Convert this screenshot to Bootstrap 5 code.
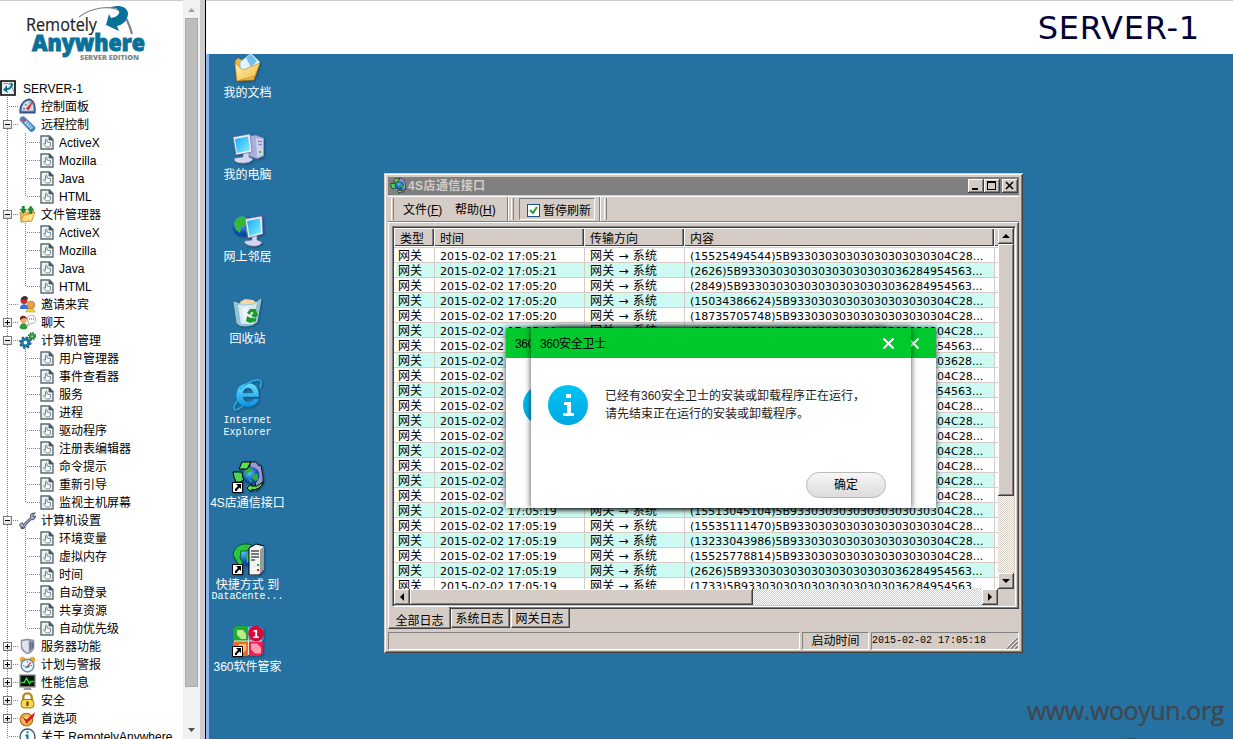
<!DOCTYPE html>
<html lang="zh-CN">
<head>
<meta charset="utf-8">
<title>SERVER-1</title>
<link href="https://cdn.jsdelivr.net/npm/bootstrap@5.3.0/dist/css/bootstrap.min.css" rel="stylesheet">
<style>
:root{--face:#d5cdc5;--dark:#404040;--mid:#808080;--sky:#2572a2}
body{height:739px;width:1233px;overflow:hidden;background:#fff;color:#000;font:12px/18px "Liberation Sans","Noto Sans CJK SC",sans-serif}
svg{display:block;flex:none}
/* left tree pane */
.side{width:206px;border-right:1px solid #000}
.side-main{width:183px;overflow:hidden;border-top:1px solid #ccc}
.brand-box{height:78px;flex:none}
.node{height:18px;white-space:nowrap;flex:none}
.node .zh{padding-top:2px}
.cell{width:18px;height:18px;flex:none;position:relative;display:flex;align-items:center;justify-content:center}
.vline{background:repeating-linear-gradient(180deg,#808080 0 1px,transparent 1px 2px) 7px 0/1px 100% no-repeat}
.vhalf{background:repeating-linear-gradient(180deg,#808080 0 1px,transparent 1px 2px) 7px 0/1px 10px no-repeat}
.hline::before{content:"";position:absolute;left:8px;right:0;top:9px;height:1px;background:repeating-linear-gradient(90deg,transparent 0 1px,#808080 1px 2px)}
.lv2.hline::before{right:-4px}
.box{position:absolute;left:3px;top:5px;width:9px;height:9px;border:1px solid #777;background:linear-gradient(#fff,#ddd)}
.box::before{content:"";position:absolute;left:1px;right:1px;top:3px;height:1px;background:#000}
.box.plus::after{content:"";position:absolute;left:3px;top:1px;bottom:1px;width:1px;background:#000}
.page-ico{margin:0 5px 0 4px}
.sb{width:17px;background:#f1f1f1;padding:0 2px}
.sb-thumb{height:669px;background:#bcbcbc;border:1px solid #aaa}
.sash{width:5px;background:#ccc}
/* right pane */
.topbar{height:54px;border-top:1px solid #ccc;padding-right:33px;font:32px/55px "DejaVu Sans",sans-serif;letter-spacing:.8px;color:#000033}
.desk{background:var(--sky);border-left:3px solid #8fb4ea;position:relative;overflow:hidden}
.desk::before{content:"";position:absolute;left:-1px;top:0;bottom:0;width:1px;background:#b9c4d4}
.launchers{width:77px;margin-top:-3px}
.launcher{height:82px;flex:none;color:#fff;text-align:center;line-height:12px;white-space:nowrap}
.launcher svg{margin-bottom:4px;filter:drop-shadow(1px 1px 1px rgba(0,0,0,.35))}
.mono{font-family:"Liberation Mono","Noto Sans CJK SC",monospace;font-size:10px}
.launcher .mono{display:block}
/* classic window */
.win{position:absolute;left:175px;top:119px;width:639px;height:480px;padding:4px;background:var(--face);line-height:14px;
 box-shadow:inset 1px 1px var(--face),inset -1px -1px var(--dark),inset 2px 2px #fff,inset -2px -2px var(--mid)}
.raised{background:var(--face);box-shadow:inset -1px -1px var(--dark),inset 1px 1px #fff,inset -2px -2px var(--mid)}
.caption-bar{height:18px;background:#808080;color:var(--face);font-weight:bold;line-height:17px;padding:0 1px 0 2px;letter-spacing:.4px}
.wbtn{width:16px;height:14px}
.tools{height:26px;margin-top:1px;border-top:1px solid #fff;border-bottom:1px solid var(--mid);flex:none;padding-left:3px}
.tools span{padding-top:2px}
.grip{width:3px;height:22px;border-left:1px solid #fff;border-right:1px solid var(--mid);flex:none}
.bandend{width:2px;height:24px;border-left:1px solid var(--mid);border-right:1px solid #fff;flex:none}
.pressed{width:76px;height:22px;border:1px solid #fff;border-top-color:var(--mid);border-left-color:var(--mid);padding:3px 0 0 7px;margin:0 4px 0 5px}
.chk{width:13px;height:13px;border:1px solid #1c5180;background:#fff;margin-right:3px}
.tabpage{height:387px;flex:none;border:1px solid #fff;border-right-color:var(--dark);border-bottom-color:var(--dark);box-shadow:inset -1px -1px var(--mid);padding:3px}
.sunk{width:624px;height:381px;border:1px solid;border-color:var(--mid) #fff #fff var(--mid);box-shadow:inset 1px 1px var(--dark);padding:1px}
.listwrap{width:604px}
.listbox{height:361px;background:#fff;overflow:hidden}
.lhead{display:grid;grid-template-columns:40px 150px 100px 310px 4px;height:18px;margin-bottom:1px}
.lhead div{background:var(--face);box-shadow:inset 1px 1px #fff,inset -1px -1px var(--dark),inset -2px 0 var(--mid);padding:4px 0 0 6px;line-height:14px}
.rows{border-top:1px solid var(--face);font:11px/14px "DejaVu Sans","Noto Sans CJK SC",sans-serif}
.lrow{display:grid;grid-template-columns:41px 150px 100px 310px 2px;height:15px;white-space:nowrap}
.lrow div{border-right:1px solid var(--face);border-bottom:1px solid var(--face);padding-left:5px;overflow:hidden;height:15px;line-height:17px}
.lrow div:last-child{border-right:0}
.lrow .cj{font-size:12px;padding-left:5px;letter-spacing:.2px}
.lrow .cj:first-child{padding-left:4px;letter-spacing:0}
.lrow:nth-child(even) div:not(:last-child){background:#cdfaf2}
.lrow:nth-child(even) div:first-child{box-shadow:inset 2px 0 #fff}
.dither{background:conic-gradient(#fff 25%,var(--face) 0 50%,#fff 0 75%,var(--face) 0) 0 0/2px 2px}
.vbar,.hbar,.arrowbtn{display:flex}
.vbar{flex-direction:column;width:16px;height:361px}
.hbar{height:16px}
.arrowbtn{width:16px;height:16px;align-items:center;justify-content:center;flex:none}
.tabs{height:21px;align-items:flex-start}
.tabx{height:19px;width:59px;text-align:center;border:1px solid #fff;border-top:0;border-right-color:var(--dark);border-bottom-color:var(--dark);box-shadow:inset -1px -1px var(--mid);line-height:21px;margin-right:1px;padding-right:2px}
.tabx.on{width:63px;height:22px;margin:-2px 0 0 0;background:var(--face);position:relative;line-height:28px;padding:0}
.status{height:18px;margin-top:2px;gap:2px}
.pane{border:1px solid #fff;border-top-color:var(--mid);border-left-color:var(--mid);line-height:16px}
/* message dialogs */
.msg{position:absolute;top:274px;width:380px;height:180px;background:#fff;box-shadow:0 0 6px rgba(0,0,0,.75);line-height:18px}
.msg-head{height:30px;background:#00c92d;padding:0 17px 0 9px}
.msg-head span{padding-top:2px;letter-spacing:-.3px}
.msg-body{height:150px;padding:27px 25px 10px 17px;color:#222}
.msg-text{margin:2px 0 0 17px}
.okbtn{width:80px;height:26px;border:1px solid #b9b9b9;border-radius:13px;background:linear-gradient(#f6f6f6,#dcdcdc);font-size:12px;line-height:24px;padding:0;color:#000}
.stamp{position:absolute;right:9px;bottom:12px;font:25px/34px "Open Sans",sans-serif;letter-spacing:-.4px;color:#40474c;-webkit-text-stroke:.3px #40474c}
.stamp-dot{position:absolute;left:909px;top:684px;width:26px;height:26px;border-radius:50%;background:#1d4a66}
</style>
</head>
<body class="d-flex">
<svg width="0" height="0" class="position-absolute">
<defs>
<linearGradient id="scr" x1="0" y1="0" x2="1" y2="1"><stop offset="0" stop-color="#1aa9f5"/><stop offset="1" stop-color="#7ff0ff"/></linearGradient>
<linearGradient id="fold" x1="0" y1="0" x2="1" y2="1"><stop offset="0" stop-color="#fff3b0"/><stop offset="1" stop-color="#f2b93c"/></linearGradient>
<radialGradient id="globe" cx=".4" cy=".35"><stop offset="0" stop-color="#5cc8ff"/><stop offset="1" stop-color="#0846b0"/></radialGradient>
<linearGradient id="ieg" x1="0" y1="0" x2="0" y2="1"><stop offset="0" stop-color="#6fe0ff"/><stop offset="1" stop-color="#0a8ee0"/></linearGradient>
<linearGradient id="inf" x1="0" y1="0" x2="0" y2="1"><stop offset="0" stop-color="#00c4f5"/><stop offset="1" stop-color="#00a8e2"/></linearGradient>
<symbol id="t-root" viewBox="0 0 17 17"><path d="M1 1h14v14H1z" fill="#e8f2f6" stroke="#000" stroke-width="1.600"/><path d="M3.500 4c4-2 8 0 10.500 8" fill="none" stroke="#888"/><path d="M9 3c4-1 5 2 3 4-1 2-3 3-5 3l1 3-5-3 4-5v3c2 0 4-2 4-3s-1-1.500-2-2z" fill="#08708f"/></symbol>
<symbol id="t-dash" viewBox="0 0 16 16"><path d="M1 14C0 7 4 2 10 1c4 1 6 6 5 13z" fill="#5879a8" stroke="#2c4a78"/><path d="M2.500 12c0-6 3-9 7-9.500 3 1 4.500 5 4 9.500z" fill="#cfdded"/><path d="M7 10l5.500-6L9 11z" fill="#e02030" stroke="#e02030" stroke-width=".8"/><path d="M4 10h1.500M6 6l1 1M10 4v1" stroke="#456"/></symbol>
<symbol id="t-remote" viewBox="0 0 16 16"><path d="M1 4Q1 0 5 1l10 9.500q0 4-4 4z" fill="#4a92cc" stroke="#2a6aa4" stroke-width=".8"/><path d="M6 5.500l6 6" stroke="#c9e6fa" stroke-width="3" stroke-dasharray="1.500 1"/><circle cx="4.300" cy="3.500" r="1.500" fill="#d33a6c"/></symbol>
<symbol id="t-files" viewBox="0 0 16 16"><path d="M1 6l5-1 1 1 7-1-2 9-10 1z" fill="#f4bd4d" stroke="#b67b1d" stroke-width=".7"/><path d="M4 9l11-3-3 8-10 1z" fill="#ffe08a" stroke="#b67b1d" stroke-width=".6"/><path d="M3 0v3H1l3 4 3-4H5V0zM10 7V4H8l3-4 3 4h-2v3z" fill="#1a9a2c" stroke="#075c14" stroke-width=".5"/></symbol>
<symbol id="t-guest" viewBox="0 0 17 17"><path d="M1 12c0-5 8-5 8 0v1H1z" fill="#3c6fe0"/><circle cx="5" cy="4.500" r="3.500" fill="#c22f2a"/><path d="M2 4c0-5 7-5 7-1z" fill="#333"/><path d="M7 16c0-5 9-5 9 0z" fill="#f3d435" stroke="#b79310" stroke-width=".5"/><circle cx="12" cy="9" r="3.800" fill="#eda04a" stroke="#a65d1a" stroke-width=".6"/></symbol>
<symbol id="t-chat" viewBox="0 0 17 17"><path d="M1 14c0-6 7-6 7 0l-2 1H3z" fill="#28a035" stroke="#106018" stroke-width=".5"/><circle cx="4.500" cy="6" r="3.300" fill="#efb06c"/><path d="M1 6c-1-6 7-5 7-1L5 4z" fill="#7a2a12"/><path d="M8 5c0-5 8.500-5 8.500 0s-3 4.500-5 4.500l-3 2.500 1-4z" fill="#fff" stroke="#999" stroke-width=".8"/><path d="M10 5h1m1 0h1m1 0h1" stroke="#555"/></symbol>
<symbol id="t-gear" viewBox="0 0 16 16"><circle cx="6" cy="10" r="3.200" fill="none" stroke="#2278a5" stroke-width="3"/><circle cx="6" cy="10" r="5" fill="none" stroke="#1b5d84" stroke-width="1.800" stroke-dasharray="2 1.900"/><circle cx="12.300" cy="4" r="1.800" fill="none" stroke="#2d9a44" stroke-width="2.200"/><circle cx="12.300" cy="4" r="3.200" fill="none" stroke="#187030" stroke-width="1.400" stroke-dasharray="1.400 1.100"/></symbol>
<symbol id="t-wrench" viewBox="0 0 16 16"><path d="M2 14.500q-3-3 1-4.500l1 2 1-1L11 5q-1-4 4-4l-2 2 .5 1.500 2-.5q-1 4-4 3L6 12.500q0 3.500-4 3.500l2-2z" fill="#b8bdd0" stroke="#555c78" stroke-width="1"/></symbol>
<symbol id="t-shield" viewBox="0 0 16 16"><path d="M2 2l6-1 6 1v8q-2 4-6 5-5-2-6-6z" fill="#9599b0" stroke="#777b93" stroke-width=".6"/><path d="M3 3l6-1v12q-5-2-6-6z" fill="#e3e5ee"/><path d="M11 4v7M13 4v5" stroke="#4f556e"/></symbol>
<symbol id="t-alarm" viewBox="0 0 16 16"><circle cx="3.500" cy="3.500" r="2.800" fill="#f2a431"/><circle cx="12.500" cy="3.500" r="2.800" fill="#f2a431"/><circle cx="8" cy="9" r="6" fill="#e3f5fa" stroke="#6c8ca0" stroke-width="1.400"/><path d="M5 10q3 3 6-1z" fill="#20809c"/><path d="M8 10l3-4" stroke="#d22"/><path d="M4 9h1M8 5v1M12 9h-1" stroke="#467"/></symbol>
<symbol id="t-perf" viewBox="0 0 16 16"><path d="M1 1h14v11H1z" fill="#06140a" stroke="#777" stroke-width="1.200"/><path d="M2 8h3l2-4 3 5 1-2h3" fill="none" stroke="#24e044" stroke-width="1.400"/><path d="M5 13h6l1 2H4z" fill="#999"/></symbol>
<symbol id="t-lock" viewBox="0 0 16 16"><path d="M4 8V5c0-5 8-5 8 0v3" fill="none" stroke="#b18a1e" stroke-width="2.200"/><rect x="2" y="7" width="12" height="8" rx="3" fill="#ffd84a" stroke="#94690a" stroke-width=".9"/><path d="M8 9v4" stroke="#503800" stroke-width="2"/></symbol>
<symbol id="t-pref" viewBox="0 0 16 16"><circle cx="7" cy="9" r="6" fill="#efb04a" stroke="#a36a18"/><circle cx="7" cy="9" r="3" fill="#ffe3a0"/><path d="M3 6l4 3 8-7-1 4-7 7z" fill="#dd1d23"/></symbol>
<symbol id="t-info" viewBox="0 0 16 16"><circle cx="8" cy="8" r="7" fill="#fff" stroke="#3b5c70" stroke-width="1.300"/><path d="M8 3v2M6 7h2v5M6 12h4" fill="none" stroke="#087fae" stroke-width="2"/></symbol>
<symbol id="t-page" viewBox="0 0 14 15"><path d="M1 1h8.500L13 4.500V14H1z" fill="#eef2f2" stroke="#5c6c74" stroke-width="1.400"/><path d="M9 1v4h4z" fill="#4a5a62" stroke="#4a5a62" stroke-width=".8"/><path d="M5.500 9V4.500q1-1 1.500 0V7l3.500.7V10L9.500 12h-3L3.500 9l.7-.7z" fill="#fff" stroke="#6c7e88" stroke-width=".9"/></symbol>
<symbol id="shortcut" viewBox="0 0 11 11"><path d="M.5.5h10v10H.5z" fill="#fff" stroke="#000"/><path d="M4 2h5v5L7.500 5.500 5 8v1H3V7l3-3z" fill="#000"/></symbol>
<symbol id="d-docs" viewBox="0 0 32 32"><path d="M3 10l3-3 6 3 3-4 12 8-5 15-17 1z" fill="#f0b83e" stroke="#a97216" stroke-width=".7"/><path d="M8 11L19 2l9 9-8 12-12 1z" fill="#e1f4ff" stroke="#6fa9cf" stroke-width=".7"/><path d="M14 7l5-4 6 7-6 6z" fill="#75bdee"/><path d="M3 12l8 7 17-7-5 13-18 5z" fill="url(#fold)" stroke="#c38b24" stroke-width=".7"/></symbol>
<symbol id="d-pc" viewBox="0 0 32 32"><path d="M17 3l7-1 8 3v18l-7 3-8-3z" fill="#aab0dc" stroke="#62689f" stroke-width=".6"/><path d="M24 5l7 1v16l-6 3z" fill="#cfd2ef"/><path d="M26 8l4 1M26 11l4 1" stroke="#6b70aa"/><path d="M27 19h2" stroke="#29c93a" stroke-width="2"/><path d="M11 18l6-1v7l4 2q-2 5-14 4-7-2-4-5l8-1z" fill="#d2d5ee" stroke="#7277a5" stroke-width=".6"/><path d="M1 4l17-3 2 18-16 3z" fill="#eceefa" stroke="#6268a0" stroke-width=".7"/><path d="M3 6l13-2.500L18 17 5 20z" fill="url(#scr)"/></symbol>
<symbol id="d-net" viewBox="0 0 32 32"><circle cx="11" cy="11" r="10.500" fill="url(#globe)"/><path d="M4 4l6-3 5 2-3 3 2 3-5 3-1 6-4-3-2-7zM13 13l5 2-3 5z" fill="#37b832"/><path d="M20 20l5-1v6l5 2q-1 5-11 4-8-2-6-5l7-1z" fill="#d2d5ee" stroke="#7277a5" stroke-width=".6"/><path d="M13 4l17-3 1 18-15 4z" fill="#eceefa" stroke="#6268a0" stroke-width=".7"/><path d="M15 6l13-2.500 1 14L17.500 21z" fill="url(#scr)"/></symbol>
<symbol id="d-bin" viewBox="0 0 32 32"><path d="M8 5l5-3 8 1 4 3-2 8H10z" fill="#f7d7a2"/><path d="M6 8l6-1 8 2 5 6-4 12H9z" fill="#e6e3f3"/><path d="M2 5l9 3 11-1 7-5-4 23q-4 4-12 4-6 0-8-3z" fill="#cdeff6" fill-opacity=".7" stroke="#9fc6da"/><path d="M10 12l5-3 6 8-3 9-6-4z" fill="#f4f2fb"/><path d="M15 16l3-4h6l-1 4-4-1-1 3zM24 13l2 5-4 4v-2l-3-1zM15 19l-1 5 4 2 6-2v-4l-5 1z" fill="#17a027"/></symbol>
<symbol id="d-ie" viewBox="0 0 32 32"><path d="M27 18H11q1 5 6 5 3 0 5-3h5q-3 8-11 8Q4 27 4 16 5 5 16 4q11 0 11 14zM11 14h10q-1-5-5-5t-5 5z" fill="url(#ieg)" stroke="#0a7fc0" stroke-width=".5"/><path d="M5 22Q0 30 3 31q3 0 8-4M8 10Q20 0 27 1q4 1 1 8" fill="none" stroke="#20aee8" stroke-width="1.600"/></symbol>
<symbol id="d-4s" viewBox="0 0 32 32"><path d="M18 1h6l3 4 2-1 2 12v6l-6 8-2-3 2-14-7-6z" fill="#9b98cf" stroke="#181530"/><circle cx="19" cy="14.500" r="8.500" fill="url(#globe)"/><path d="M14 8l5-1 1 3-4 2-2 3zM22 13l4 0 0 6-3 1-3-3zM16 18l4 1-1 3z" fill="#2fae3a"/><path d="M10 1h9l-4 7H7z" fill="#58dd58" stroke="#000"/><path d="M1 11h9l1 6 1 2-4 2H4l-2-5z" fill="#4cd552" stroke="#000"/><path d="M15 27l4-4v2l6 0 6-4q-2 8-12 8v2z" fill="#58dd58" stroke="#000"/></symbol>
<symbol id="d-dc" viewBox="0 0 32 32"><circle cx="13" cy="12" r="11" fill="url(#globe)"/><path d="M1 12C2 3 10-1 20 2l-5 6-6 0-1 7 3 5-3 4z" fill="#2bc63c" stroke="#042" stroke-width=".8"/><path d="M14 12l5-2v7l-4 3z" fill="#2bc63c"/><path d="M17 5l7-4 8 2v24l-5 5H17z" fill="#f3f3f3" stroke="#000"/><path d="M28 7v24l4-4V3z" fill="#999"/><path d="M19 8h8M19 11h8M19 14h8M19 17h4" stroke="#000"/><path d="M25 22h2" stroke="#18b42a" stroke-width="2"/><path d="M25 27h2" stroke="#d22" stroke-width="2"/></symbol>
<symbol id="d-360" viewBox="0 0 32 32"><rect x="2" y="2" width="28" height="28" rx="3" fill="#e8e8d0"/><path d="M4 1h12v14.500H1V4z" fill="#20aa35"/><path d="M16.500 1h12l3 3v11.500h-15z" fill="#2c9fdd"/><path d="M1 16.500h15V31H4l-3-3z" fill="#f1682d"/><path d="M17 16.500h14V28l-3 3H17z" fill="#ec1e55"/><path d="M5 5h6l3 4v5H9l-4-4z" fill="#b9eb8d"/><path d="M7 19h7v6l-3 3H6v-5z" fill="#ffc16e"/><path d="M19 18.500h6l4 4v6h-6l-4-4z" fill="#ff9db0"/><circle cx="24" cy="8.500" r="7.800" fill="#d9083d"/><text x="24" y="12.500" font-family="DejaVu Sans" font-size="10.500" font-weight="bold" fill="#fff" text-anchor="middle">1</text></symbol>
</defs>
</svg>

<aside class="side d-flex h-100 flex-shrink-0">
  <div class="side-main d-flex flex-column h-100">
    <div class="brand-box">
      <svg width="183" height="66" viewBox="0 1 183 66">
        <path d="M79 17C92 7 111 5 120 11" fill="none" stroke="#7d868b" stroke-width="1.200"/>
        <path d="M121 11q7 8 11 23" fill="none" stroke="#7d868b" stroke-width="2.200"/>
        <path d="M109 8c8-4 18-2 19 5 0 7-5 12-11 13l2 5-13-6 3-11 2 4c6-1 9-4 8-7-1-3-5-4-10-3z" fill="#08719a"/>
        <text x="26" y="30.500" font-family="Open Sans" font-size="19" fill="#222" stroke="#222" stroke-width=".2" textLength="71" lengthAdjust="spacingAndGlyphs">Remotely</text>
        <text x="32" y="51" font-family="Open Sans" font-size="22.500" font-weight="800" fill="#08719a" stroke="#08719a" stroke-width=".9" textLength="113" lengthAdjust="spacingAndGlyphs">Anywhere</text>
        <text x="80" y="59.500" font-family="Open Sans" font-size="7.500" font-weight="800" fill="#7f8589" textLength="59" lengthAdjust="spacingAndGlyphs">SERVER EDITION</text>
      </svg>
    </div>
    <div id="tree"></div>
  </div>
  <div class="sb d-flex flex-column">
    <svg width="13" height="18"><path d="M3 12h7L6.500 8z" fill="#a3a3a3"/></svg>
    <div class="sb-thumb"></div>
    <svg width="13" height="52"><path d="M3 41h7l-3.500 4z" fill="#505050"/></svg>
  </div>
  <div class="sash"></div>
</aside>

<main class="flex-grow-1 d-flex flex-column h-100">
  <header class="topbar text-end flex-shrink-0">SERVER-1</header>
  <section class="desk flex-grow-1">
    <div class="launchers d-flex flex-column" id="launchers"></div>

    <div class="win d-flex flex-column">
      <div class="caption-bar d-flex align-items-center flex-shrink-0">
        <svg width="16" height="16" class="me-1"><use href="#d-4s"/></svg><span class="flex-grow-1" style="margin-left:-2px">4S店通信接口</span>
        <div class="wbtn raised"><svg width="16" height="14"><path d="M4 9h6v2H4z"/></svg></div>
        <div class="wbtn raised" style="margin-right:2px"><svg width="16" height="14"><path d="M3 2h9v9H3zM4 4v6h7V4z" fill-rule="evenodd"/></svg></div>
        <div class="wbtn raised"><svg width="16" height="14"><path d="M4 3l7 7M11 3l-7 7" stroke="#000" stroke-width="1.600"/></svg></div>
      </div>
      <div class="tools d-flex align-items-center">
        <div class="grip me-2"></div><span style="width:52px;margin-left:1px">文件(<u>F</u>)</span><span style="width:52px">帮助(<u>H</u>)</span>
        <div class="bandend"></div><div class="grip" style="margin-left:2px"></div>
        <div class="pressed d-flex align-items-center"><div class="chk"><svg width="11" height="11"><path d="M2 5l3 3 4-6" fill="none" stroke="#21a121" stroke-width="2"/></svg></div>暂停刷新</div>
        <div class="bandend"></div><div class="grip" style="margin-left:3px"></div>
      </div>
      <div class="tabpage">
        <div class="sunk d-flex">
          <div class="listwrap">
            <div class="listbox">
              <div class="lhead"><div>类型</div><div>时间</div><div>传输方向</div><div>内容</div><div></div></div>
              <div class="rows" id="rows"></div>
            </div>
            <div class="hbar dither">
              <div class="arrowbtn raised"><svg width="8" height="8"><path d="M6 0v8L2 4z"/></svg></div>
              <div class="raised" style="width:343px"></div>
              <div class="arrowbtn raised ms-auto"><svg width="8" height="8"><path d="M2 0v8l4-4z"/></svg></div>
            </div>
          </div>
          <div>
            <div class="vbar dither">
              <div class="arrowbtn raised"><svg width="8" height="8"><path d="M0 6h8L4 2z"/></svg></div>
              <div class="raised" style="height:252px"></div>
              <div class="arrowbtn raised mt-auto"><svg width="8" height="8"><path d="M0 2h8L4 6z"/></svg></div>
            </div>
          </div>
        </div>
      </div>
      <div class="tabs d-flex flex-shrink-0"><div class="tabx on">全部日志</div><div class="tabx">系统日志</div><div class="tabx">网关日志</div></div>
      <div class="status d-flex">
        <div class="pane" style="width:412px"></div>
        <div class="pane text-center" style="width:67px">启动时间</div>
        <div class="pane mono flex-grow-1 d-flex justify-content-between"><span>2015-02-02 17:05:18</span><svg width="12" height="16"><path d="M1 16L12 5M5 16l7-7M9 16l3-3" stroke="#808080" stroke-width="1.600"/><path d="M0 15L11 4M4 15l8-8M8 15l4-4" stroke="#fff" stroke-width=".8"/></svg></div>
      </div>
    </div>

    <div class="msg" style="left:297px"><div class="msg-head d-flex align-items-center"><span>360安全卫士</span></div>
      <div class="msg-body"><svg width="40" height="40"><circle cx="20" cy="20" r="20" fill="url(#inf)"/></svg></div></div>
    <div class="msg" style="left:347px"><div class="msg-head d-flex align-items-center justify-content-end"><svg width="11" height="11"><path d="M.5.5l10 10M10.500.5l-10 10" stroke="#fff" stroke-width="2"/></svg></div></div>
    <div class="msg" style="left:322px">
      <div class="msg-head d-flex align-items-center justify-content-between"><span>360安全卫士</span><svg width="11" height="11"><path d="M.5.5l10 10M10.500.5l-10 10" stroke="#fff" stroke-width="2"/></svg></div>
      <div class="msg-body d-flex flex-column justify-content-between">
        <div class="d-flex">
          <svg width="40" height="40"><circle cx="20" cy="20" r="20" fill="url(#inf)"/><path d="M18 9h5v4h-5zM16 17h7v11h3v3H15v-3h4v-8h-3z" fill="#fff"/></svg>
          <div class="msg-text">已经有360安全卫士的安装或卸载程序正在运行，<br>请先结束正在运行的安装或卸载程序。</div>
        </div>
        <button class="okbtn align-self-end">确定</button>
      </div>
    </div>
    <div class="stamp">www.wooyun.org</div>
    <div class="stamp-dot"></div>
  </section>
</main>

<script src="https://cdn.jsdelivr.net/npm/bootstrap@5.3.0/dist/js/bootstrap.bundle.min.js"></script>
<script>
// [label, icon, toggle, children]
const four = ['ActiveX','Mozilla','Java','HTML'];
const tree = [
  ['控制面板','t-dash','',[]],
  ['远程控制','t-remote','minus',four],
  ['文件管理器','t-files','minus',four],
  ['邀请来宾','t-guest','',[]],
  ['聊天','t-chat','plus',[]],
  ['计算机管理','t-gear','minus',['用户管理器','事件查看器','服务','进程','驱动程序','注册表编辑器','命令提示','重新引导','监视主机屏幕']],
  ['计算机设置','t-wrench','minus',['环境变量','虚拟内存','时间','自动登录','共享资源','自动优先级']],
  ['服务器功能','t-shield','plus',[]],
  ['计划与警报','t-alarm','plus',[]],
  ['性能信息','t-perf','plus',[]],
  ['安全','t-lock','plus',[]],
  ['首选项','t-pref','plus',[]],
  ['关于 RemotelyAnywhere','t-info','',[]]
];
let h = '<div class="node d-flex align-items-center"><svg width="17" height="17"><use href="#t-root"/></svg><span class="zh" style="margin-left:6px">SERVER-1</span></div>';
for (const [label, icon, toggle, kids] of tree) {
  h += `<div class="node d-flex align-items-center"><div class="cell vline hline">${toggle ? `<i class="box ${toggle}"></i>` : ''}</div><div class="cell"><svg width="17" height="17"><use href="#${icon}"/></svg></div><span class="zh" style="margin-left:5px">${label}</span></div>`;
  kids.forEach((k, i) => {
    const last = i === kids.length - 1;
    h += `<div class="node d-flex align-items-center"><div class="cell vline"></div><div class="cell hline lv2 ${last ? 'vhalf' : 'vline'}"></div><svg class="page-ico" width="14" height="15"><use href="#t-page"/></svg><span class="zh">${k}</span></div>`;
  });
}
document.getElementById('tree').innerHTML = h;

const apps = [['d-docs','我的文档'],['d-pc','我的电脑'],['d-net','网上邻居'],['d-bin','回收站'],
  ['d-ie','<span class="mono">Internet<br>Explorer</span>'],['d-4s','4S店通信接口',1],
  ['d-dc','快捷方式 到<span class="mono">DataCente...</span>',1],['d-360','360软件管家',1]];
document.getElementById('launchers').innerHTML = apps.map(([id, name, link]) =>
  `<div class="launcher d-flex flex-column align-items-center"><svg width="32" height="32" viewBox="0 0 32 32"><use href="#${id}" width="32" height="32"/>${link ? '<use href="#shortcut" x="0" y="21" width="11" height="11"/>' : ''}</svg><div>${name}</div></div>`).join('');

const z = '30'.repeat(10), A = '5B93' + z + '4C28...', B = '5B93' + z + '36284954563...', C = '5B93' + z + '303030303628...';
const log = [['21','15525494544',A],['21','2626',B],['20','2849',B],['20','15034386624',A],['20','18735705748',A],
  ['20','15535473234',A],['20','2626',B],['20','733',C],['20','15525494544',A],['20','2849',B],
  ['19','15034386624',A],['19','18735705748',A],['19','15535473234',A],['19','15535473230',A],['19','13233043986',A],
  ['19','15525778814',A],['19','15535111470',A],['19','15513045104',A],['19','15535111470',A],['19','13233043986',A],
  ['19','15525778814',A],['19','2626',B],['19','1733',B]];
document.getElementById('rows').innerHTML = log.map(([s, id, d]) =>
  `<div class="lrow"><div class="cj">网关</div><div>2015-02-02 17:05:${s}</div><div class="cj">网关 → 系统</div><div>(${id})${d}</div><div></div></div>`).join('');
</script>
</body>
</html>
